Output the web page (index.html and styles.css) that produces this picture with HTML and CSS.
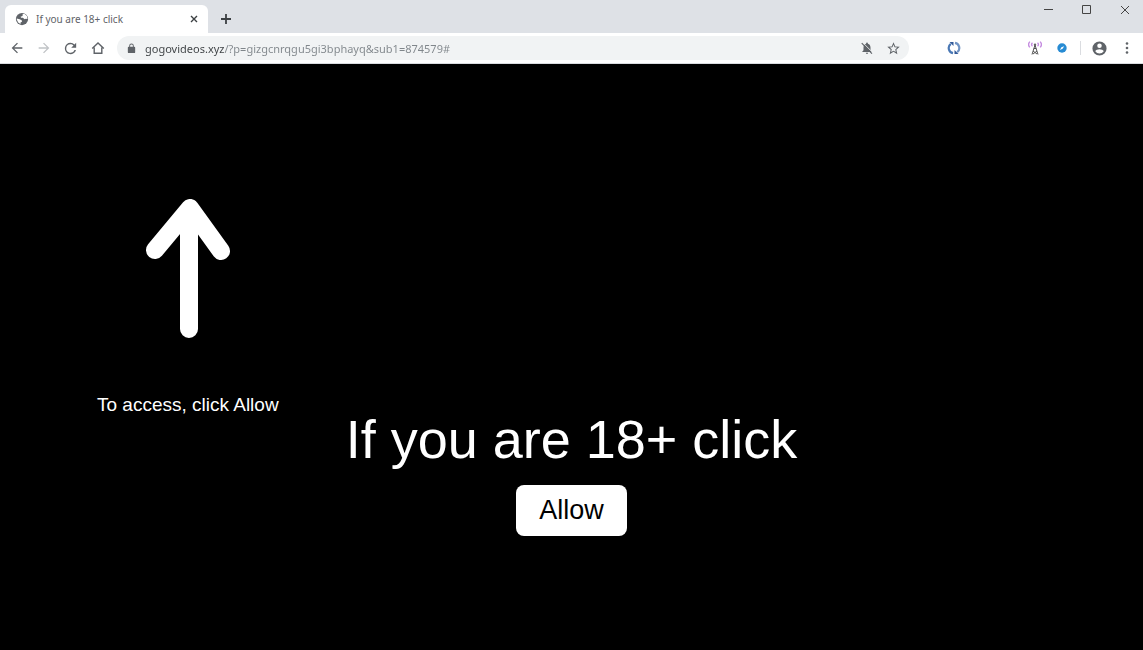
FILE: index.html
```
<!DOCTYPE html>
<html lang="en">
  <head>
    <meta charset="UTF-8" />
    <meta name="viewport" content="width=device-width, initial-scale=1.0" />
    <title>If you are 18+ click</title>
    <link rel="stylesheet" href="styles.css" />
  </head>
  <body>
    <header class="browser">
      <div class="tab-strip">
        <div class="tab">
          <svg class="favicon" viewBox="0 0 24 24" width="14" height="14">
            <circle cx="12" cy="12" r="10.5" fill="#5f6368" />
            <path d="M13 4l3-1 4.500 4 1 5-3-.5-2 1-3-2.500h-3l-1-2 3.500-1zM3 11l5 1.500 3.500 1.500.5 2.500-2.500 1.500v2.500l-4-2.500-2.500-5z" fill="#fff" />
          </svg>
          <span class="tab-title">If you are 18+ click</span>
          <button type="button" class="tab-close" aria-label="Close tab">
            <svg viewBox="0 0 8 8" width="8" height="8">
              <path d="M1 1l6 6M7 1l-6 6" stroke="#3c4043" stroke-width="1.400" />
            </svg>
          </button>
        </div>
        <button type="button" class="new-tab" aria-label="New tab">
          <svg viewBox="0 0 12 12" width="12" height="12">
            <path d="M6 1v10M1 6h10" stroke="#3c4043" stroke-width="1.800" />
          </svg>
        </button>
        <div class="window-controls">
          <button type="button" aria-label="Minimize">
            <svg viewBox="0 0 12 10" width="12" height="10">
              <path d="M2 4.500h9" stroke="#444" />
            </svg>
          </button>
          <button type="button" aria-label="Maximize">
            <svg viewBox="0 0 12 10" width="12" height="10">
              <path d="M2.500.5h8v8h-8z" fill="none" stroke="#444" />
            </svg>
          </button>
          <button type="button" aria-label="Close">
            <svg viewBox="0 0 12 10" width="12" height="10">
              <path d="M3 1l8 8M11 1l-8 8" stroke="#444" />
            </svg>
          </button>
        </div>
      </div>

      <div class="toolbar">
        <button type="button" class="tool" aria-label="Back">
          <svg viewBox="0 0 24 24" width="16" height="16" fill="#5f6368">
            <path d="M20 11H7.830l5.590-5.590L12 4l-8 8 8 8 1.410-1.410L7.830 13H20v-2z" />
          </svg>
        </button>
        <button type="button" class="tool" aria-label="Forward">
          <svg viewBox="0 0 24 24" width="16" height="16" fill="#c0c3c6">
            <path d="M12 4l-1.410 1.410L16.170 11H4v2h12.170l-5.580 5.590L12 20l8-8z" />
          </svg>
        </button>
        <button type="button" class="tool" aria-label="Reload">
          <svg viewBox="0 0 24 24" width="17" height="17" fill="#5f6368">
            <path d="M17.650 6.350A7.960 7.960 0 0 0 12 4a8 8 0 1 0 7.730 10h-2.080A6 6 0 1 1 12 6c1.660 0 3.140.69 4.220 1.780L13 11h7V4l-2.350 2.350z" />
          </svg>
        </button>
        <button type="button" class="tool" aria-label="Home">
          <svg viewBox="0 0 16 16" width="16" height="16">
            <path d="M2.200 8.500L8 3l5.800 5.500M4.200 7.500v5.800h7.600V7.500" fill="none" stroke="#5f6368" stroke-width="1.400" />
          </svg>
        </button>

        <form class="address-bar">
          <svg class="lock" viewBox="0 0 24 24" width="11" height="11">
            <path d="M18 8h-1V6A5 5 0 0 0 7 6v2H6a2 2 0 0 0-2 2v10a2 2 0 0 0 2 2h12a2 2 0 0 0 2-2V10a2 2 0 0 0-2-2zM9 6a3 3 0 0 1 6 0v2H9z" fill="#5f6368" />
          </svg>
          <input type="text" class="url" aria-label="Address" value="gogovideos.xyz/?p=gizgcnrqgu5gi3bphayq&amp;sub1=874579#" />
          <button type="button" class="tool" aria-label="Notifications blocked">
            <svg viewBox="0 0 24 24" width="14" height="14">
              <path d="M12 22a2 2 0 0 0 2-2h-4a2 2 0 0 0 2 2zM18 16v-5c0-3.100-1.600-5.600-4.500-6.300V4a1.500 1.500 0 0 0-3 0v.7C7.600 5.400 6 7.900 6 11v5l-2 2v1h16v-1z" fill="#5f6368" />
              <path d="M4.500 2.500L22 20" stroke="#f1f3f4" stroke-width="1.500" />
              <path d="M3 3.500L20.500 21.500" stroke="#5f6368" stroke-width="2" />
            </svg>
          </button>
          <button type="button" class="tool" aria-label="Bookmark this tab">
            <svg viewBox="0 0 24 24" width="15" height="15">
              <path d="M22 9.240l-7.190-.62L12 2 9.190 8.630 2 9.240l5.460 4.730L5.820 21 12 17.270 18.180 21l-1.630-7.030zM12 15.400l-3.760 2.270 1-4.280-3.320-2.880 4.380-.38L12 6.100l1.710 4.040 4.380.38-3.320 2.880 1 4.280z" fill="#5f6368" />
            </svg>
          </button>
        </form>

        <button type="button" class="tool sync" aria-label="Sync extension">
          <svg viewBox="0 0 14 14" width="14" height="14" fill="none" stroke-width="2.200">
            <path d="M6 12.200A5.300 5.300 0 0 1 3.800 2.800" stroke="#4a78b5" />
            <path d="M8 1.800A5.300 5.300 0 0 1 10.200 11.200" stroke="#6f93c4" />
            <path d="M2.500 1h4v4zM11.500 13h-4V9z" fill="#315998" />
          </svg>
        </button>
        <button type="button" class="tool" aria-label="Antenna extension">
          <svg viewBox="0 0 14 14" width="14" height="14" fill="none">
            <path d="M4.500 1.800a2 2 0 0 0 0 3.400M9.500 1.800a2 2 0 0 1 0 3.400M1.800.6a4.500 4.500 0 0 0 0 5.800M12.200.6a4.500 4.500 0 0 1 0 5.800" stroke="#c58be0" stroke-width="1.400" />
            <path d="M7 4L4 13.500M7 4l3 9.500M5.800 7.500h2.400M5 10l4 3M9 10l-4 3" stroke="#555" />
            <circle cx="7" cy="3.700" r="1.200" fill="#666" />
          </svg>
        </button>
        <button type="button" class="tool" aria-label="Compass extension">
          <svg viewBox="0 0 10 10" width="10" height="10">
            <circle cx="5" cy="5" r="4.700" fill="#278bd3" />
            <path d="M7.200 3.200L5.600 5.700 2.900 6.900 4.400 4.300z" fill="#fff" />
          </svg>
        </button>
        <span class="divider"></span>
        <button type="button" class="tool" aria-label="Profile">
          <svg viewBox="0 0 24 24" width="17" height="17">
            <path d="M12 2a10 10 0 1 0 0 20 10 10 0 0 0 0-20zm0 3a3.200 3.200 0 1 1 0 6.400A3.200 3.200 0 0 1 12 5zm0 14.200a7.200 7.200 0 0 1-6-3.220c.03-1.990 4-3.080 6-3.080s5.970 1.090 6 3.080a7.200 7.200 0 0 1-6 3.220z" fill="#5f6368" />
          </svg>
        </button>
        <button type="button" class="tool" aria-label="Menu">
          <svg viewBox="0 0 4 14" width="4" height="14" fill="#5f6368">
            <circle cx="2" cy="2.500" r="1.300" />
            <circle cx="2" cy="7" r="1.300" />
            <circle cx="2" cy="11.500" r="1.300" />
          </svg>
        </button>
      </div>
    </header>

    <main class="page">
      <div class="hint">
        <svg viewBox="0 0 86 142" width="86" height="142">
          <path d="M45 10L10 52M45 10l31 43M44 14v117" fill="none" stroke="#fff" stroke-width="18" stroke-linecap="round" stroke-linejoin="round" />
        </svg>
        <p class="hint-text">To access, click Allow</p>
      </div>
      <div class="prompt">
        <h1 class="prompt-title">If you are 18+ click</h1>
        <button type="button" class="allow">Allow</button>
      </div>
    </main>
  </body>
</html>
```
FILE: styles.css
```
* {
  box-sizing: border-box;
}

body {
  display: flex;
  flex-direction: column;
  min-height: 100vh;
  margin: 0;
  background: #000;
  font-family: "Liberation Sans", Arial, sans-serif;
}

button {
  padding: 0;
  border: 0;
  background: none;
  font-family: inherit;
}

svg {
  display: block;
}

/* Browser window */
.browser {
  background: #dee1e6;
  font-family: "Noto Sans", "Open Sans", sans-serif;
}

.tab-strip {
  display: flex;
  height: 33px;
}

.tab {
  display: flex;
  align-items: center;
  width: 203px;
  margin: 5px 0 0 5px;
  padding: 0 10px;
  border-radius: 6px 6px 0 0;
  background: #fff;
}

.tab-title {
  flex: 1;
  margin-left: 7px;
  color: #5f6368;
  font-size: 10px;
}

.tab-close,
.new-tab {
  display: flex;
  align-items: center;
}

.new-tab {
  margin: 5px 0 0 12px;
}

.window-controls {
  display: flex;
  align-items: center;
  height: 20px;
  margin-left: auto;
}

.window-controls button {
  display: flex;
  align-items: center;
  justify-content: center;
  width: 38px;
  height: 20px;
}

/* Toolbar */
.toolbar {
  display: flex;
  align-items: center;
  height: 31px;
  padding: 0 3px;
  border-bottom: 1px solid #dadce0;
  background: #fff;
}

.tool {
  display: flex;
  flex: none;
  align-items: center;
  justify-content: center;
  width: 27px;
  height: 24px;
}

.address-bar {
  display: flex;
  flex: 1;
  align-items: center;
  height: 24px;
  margin-left: 6px;
  padding: 0 2px 0 9px;
  border-radius: 12px;
  background: #f1f3f4;
}

/* The domain is darker than the rest of the address */
.url {
  flex: 1;
  min-width: 0;
  margin-left: 8px;
  padding: 0;
  border: 0;
  outline: 0;
  background: linear-gradient(to right, #3c4043 79px, #80868b 79px);
  -webkit-background-clip: text;
  background-clip: text;
  color: transparent;
  font-family: inherit;
  font-size: 11px;
}

.sync {
  margin: 0 54px 0 31px;
}

.divider {
  width: 1px;
  height: 14px;
  margin: 0 5px;
  background: #dadce0;
}

/* Page content */
.page {
  display: grid;
  flex: 1;
  grid-template-columns: 1fr auto 1fr;
  align-items: start;
  color: #fff;
}

.hint {
  display: flex;
  flex-direction: column;
  align-items: center;
  justify-self: start;
  margin: 134px 0 0 97px;
}

.hint-text {
  margin: 53px 0 0;
  font-size: 19px;
  line-height: 24px;
  white-space: nowrap;
}

.prompt {
  display: flex;
  flex-direction: column;
  align-items: center;
  padding-top: 345px;
}

.prompt-title {
  margin: 0;
  font-size: 54px;
  font-weight: normal;
  line-height: 60px;
}

.allow {
  margin-top: 16px;
  padding: 10px 23px;
  border-radius: 8px;
  background: #fff;
  color: #000;
  font-size: 27px;
  line-height: 31px;
}
```
